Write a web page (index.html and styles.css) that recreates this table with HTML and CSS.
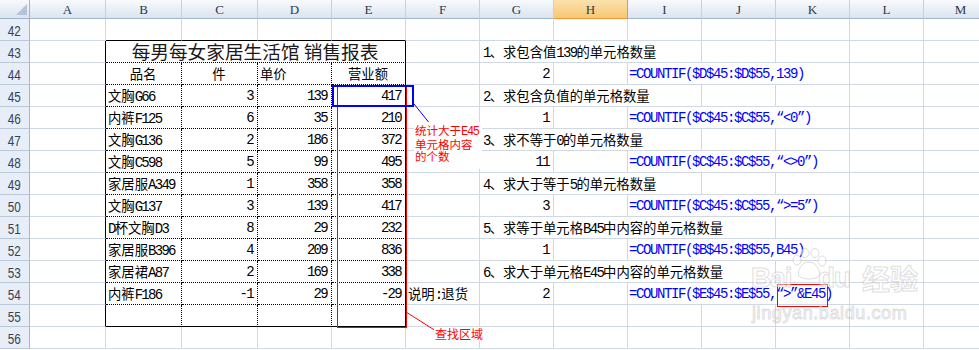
FILE: index.html
```html
<!DOCTYPE html>
<html lang="zh">
<head>
<meta charset="utf-8">
<title>销售报表</title>
<link rel="stylesheet" href="styles.css">
</head>
<body>
<div class="sheet">
  <div class="corner"></div>
  <div class="ch">A</div><div class="ch">B</div><div class="ch">C</div><div class="ch">D</div><div class="ch">E</div><div class="ch">F</div><div class="ch">G</div><div class="ch sel">H</div><div class="ch">I</div><div class="ch">J</div><div class="ch">K</div><div class="ch">L</div><div class="ch">M</div>

  <!-- 42 -->
  <div class="rh"><span>42</span></div>
  <div class="c"></div><div class="c tt"></div><div class="c tt"></div><div class="c tt"></div><div class="c tt"></div>
  <div class="c"></div><div class="c"></div><div class="c"></div><div class="c"></div><div class="c"></div><div class="c"></div><div class="c"></div><div class="c"></div>

  <!-- 43 -->
  <div class="rh"><span>43</span></div>
  <div class="c tl"></div>
  <div class="c title">每男每女家居生活馆&nbsp;销售报表</div>
  <div class="c"></div>
  <div class="c q s3"><span class="a">1</span>、求包含值<span class="a">139</span>的单元格数量</div>
  <div class="c"></div><div class="c"></div><div class="c"></div><div class="c"></div>

  <!-- 44 -->
  <div class="rh"><span>44</span></div>
  <div class="c tl"></div>
  <div class="c td ctr">品名</div><div class="c td ctr">件</div><div class="c td">单价</div><div class="c te ctr">营业额</div>
  <div class="c"></div>
  <div class="c r n">2</div><div class="c"></div>
  <div class="c f s3">=COUNTIF($D$45:$D$55,139)</div>
  <div class="c"></div><div class="c"></div>

  <!-- 45 -->
  <div class="rh"><span>45</span></div>
  <div class="c tl"></div>
  <div class="c td">文胸<span class="a">G66</span></div><div class="c td r n">3</div><div class="c td r n">139</div><div class="c te r n">417</div>
  <div class="c"></div>
  <div class="c q s3"><span class="a">2</span>、求包含负值的单元格数量</div>
  <div class="c"></div><div class="c"></div><div class="c"></div><div class="c"></div>

  <!-- 46 -->
  <div class="rh"><span>46</span></div>
  <div class="c tl"></div>
  <div class="c td">内裤<span class="a">F125</span></div><div class="c td r n">6</div><div class="c td r n">35</div><div class="c te r n">210</div>
  <div class="c"></div>
  <div class="c r n">1</div><div class="c"></div>
  <div class="c f s3">=COUNTIF($C$45:$C$55,“&lt;0”)</div>
  <div class="c"></div><div class="c"></div>

  <!-- 47 -->
  <div class="rh"><span>47</span></div>
  <div class="c tl"></div>
  <div class="c td">文胸<span class="a">G136</span></div><div class="c td r n">2</div><div class="c td r n">186</div><div class="c te r n">372</div>
  <div class="c"></div>
  <div class="c q s3"><span class="a">3</span>、求不等于<span class="a">0</span>的单元格数量</div>
  <div class="c"></div><div class="c"></div><div class="c"></div><div class="c"></div>

  <!-- 48 -->
  <div class="rh"><span>48</span></div>
  <div class="c tl"></div>
  <div class="c td">文胸<span class="a">C598</span></div><div class="c td r n">5</div><div class="c td r n">99</div><div class="c te r n">495</div>
  <div class="c"></div>
  <div class="c r n">11</div><div class="c"></div>
  <div class="c f s3">=COUNTIF($C$45:$C$55,“&lt;&gt;0”)</div>
  <div class="c"></div><div class="c"></div>

  <!-- 49 -->
  <div class="rh"><span>49</span></div>
  <div class="c tl"></div>
  <div class="c td">家居服<span class="a">A349</span></div><div class="c td r n">1</div><div class="c td r n">358</div><div class="c te r n">358</div>
  <div class="c"></div>
  <div class="c q s3"><span class="a">4</span>、求大于等于<span class="a">5</span>的单元格数量</div>
  <div class="c"></div><div class="c"></div><div class="c"></div><div class="c"></div>

  <!-- 50 -->
  <div class="rh"><span>50</span></div>
  <div class="c tl"></div>
  <div class="c td">文胸<span class="a">G137</span></div><div class="c td r n">3</div><div class="c td r n">139</div><div class="c te r n">417</div>
  <div class="c"></div>
  <div class="c r n">3</div><div class="c"></div>
  <div class="c f s3">=COUNTIF($C$45:$C$55,“&gt;=5”)</div>
  <div class="c"></div><div class="c"></div>

  <!-- 51 -->
  <div class="rh"><span>51</span></div>
  <div class="c tl"></div>
  <div class="c td"><span class="a">D</span>杯文胸<span class="a">D3</span></div><div class="c td r n">8</div><div class="c td r n">29</div><div class="c te r n">232</div>
  <div class="c"></div>
  <div class="c q s4"><span class="a">5</span>、求等于单元格<span class="a">B45</span>中内容的单元格数量</div>
  <div class="c"></div><div class="c"></div><div class="c"></div>

  <!-- 52 -->
  <div class="rh"><span>52</span></div>
  <div class="c tl"></div>
  <div class="c td">家居服<span class="a">B396</span></div><div class="c td r n">4</div><div class="c td r n">209</div><div class="c te r n">836</div>
  <div class="c"></div>
  <div class="c r n">1</div><div class="c"></div>
  <div class="c f s3">=COUNTIF($B$45:$B$55,B45)</div>
  <div class="c"></div><div class="c"></div>

  <!-- 53 -->
  <div class="rh"><span>53</span></div>
  <div class="c tl"></div>
  <div class="c td">家居裙<span class="a">A87</span></div><div class="c td r n">2</div><div class="c td r n">169</div><div class="c te r n">338</div>
  <div class="c"></div>
  <div class="c q s4"><span class="a">6</span>、求大于单元格<span class="a">E45</span>中内容的单元格数量</div>
  <div class="c"></div><div class="c"></div><div class="c"></div>

  <!-- 54 -->
  <div class="rh"><span>54</span></div>
  <div class="c tl"></div>
  <div class="c td">内裤<span class="a">F186</span></div><div class="c td r n">-1</div><div class="c td r n">29</div><div class="c te r n">-29</div>
  <div class="c">说明<span class="a">:</span>退货</div>
  <div class="c r n">2</div><div class="c"></div>
  <div class="c f s3">=COUNTIF($E$45:$E$55,“&gt;”&amp;E45)</div>
  <div class="c"></div><div class="c"></div>

  <!-- 55 -->
  <div class="rh"><span>55</span></div>
  <div class="c tl"></div>
  <div class="c tb"></div><div class="c tb"></div><div class="c tb"></div><div class="c teb"></div>
  <div class="c"></div><div class="c"></div><div class="c"></div><div class="c"></div><div class="c"></div><div class="c"></div><div class="c"></div><div class="c"></div>

  <!-- 56 -->
  <div class="rh"><span>56</span></div>
  <div class="c"></div><div class="c"></div><div class="c"></div><div class="c"></div><div class="c"></div>
  <div class="c"></div><div class="c"></div><div class="c"></div><div class="c"></div><div class="c"></div><div class="c"></div><div class="c"></div><div class="c"></div>

  <!-- overlays -->
  <div class="red-box"></div>
  <div class="blue-box"></div>
  <svg class="lines" width="979" height="350" viewBox="0 0 979 350">
    <line x1="414" y1="104" x2="431" y2="125" stroke="#0000ff" stroke-width="1"/>
    <line x1="406" y1="312" x2="436" y2="331" stroke="#ff0000" stroke-width="1"/>
  </svg>
  <div class="note">统计大于<span class="a">E45</span><br>单元格内容<br>的个数</div>
  <div class="label">查找区域</div>
  <div class="mark-box"></div>

  <div class="wm">
    <span class="wm-bai">Bai</span>
    <svg class="wm-paw" width="40" height="32" viewBox="0 0 40 32">
      <ellipse cx="8" cy="12" rx="4" ry="5"/>
      <ellipse cx="16" cy="5" rx="4" ry="4.5"/>
      <ellipse cx="26" cy="5" rx="4" ry="4.5"/>
      <ellipse cx="33" cy="13" rx="4" ry="5"/>
      <path d="M20 14 C12 14 8 24 10 28 C13 32 27 32 30 28 C32 24 28 14 20 14 Z"/>
    </svg>
    <span class="wm-du">du</span>
    <span class="wm-jy">经验</span>
    <span class="wm-url">jingyan.baidu.com</span>
  </div>
</div>
</body>
</html>
```

FILE: styles.css
```css
html, body {
  margin: 0;
  padding: 0;
  background: #fff;
}
body {
  width: 979px;
  height: 350px;
  overflow: hidden;
}
.sheet {
  position: relative;
  display: grid;
  grid-template-columns: 30px 76px 76px 76px repeat(10, 74px);
  grid-template-rows: 19px repeat(15, 22px);
  width: max-content;
  font-family: "Noto Sans CJK SC", sans-serif;
  font-size: 13.33px;
  color: #000;
}
.corner {
  position: relative;
  background: linear-gradient(#f7f9fc, #dbe3ee);
  border-right: 1px solid #9eb6ce;
  border-bottom: 1px solid #9eb6ce;
}
.corner::after {
  content: "";
  position: absolute;
  right: 2px;
  bottom: 3px;
  width: 0;
  height: 0;
  border-style: solid;
  border-width: 0 0 11px 11px;
  border-color: transparent transparent #b4c3d6 transparent;
}
.ch {
  display: flex;
  align-items: center;
  justify-content: center;
  padding-top: 1px;
  background: linear-gradient(#f8fafd, #dce4ef);
  border-right: 1px solid #c5d1df;
  border-bottom: 1px solid #9eb6ce;
  font-family: "Liberation Serif", serif;
  font-size: 13px;
  color: #2a3b4c;
}
.ch.sel {
  background: linear-gradient(#fbe1ad, #f7c874);
  border-right-color: #f29536;
  border-bottom-color: #f29536;
}
.rh {
  display: flex;
  align-items: flex-end;
  justify-content: center;
  padding-bottom: 1px;
  background: #e8eef7;
  border-right: 1px solid #9eb6ce;
  border-bottom: 1px solid #b9c9da;
  font-family: "Liberation Sans", sans-serif;
  font-size: 15px;
  line-height: 17px;
  color: #2f4556;
}
.rh span {
  display: inline-block;
  transform: scaleX(0.78);
}
.c {
  display: flex;
  align-items: flex-end;
  min-width: 0;
  padding: 0 3px 2px 2px;
  border-right: 1px solid #d0d7e5;
  border-bottom: 1px solid #d0d7e5;
  line-height: 16px;
  white-space: nowrap;
}
.r { justify-content: flex-end; }
.ctr { justify-content: center; }
.a, .n {
  font-family: "Liberation Mono", monospace;
  font-size: 14px;
  letter-spacing: -1.7px;
}
.a {
  position: relative;
  top: 1px;
}
.n { padding-right: 4px; }
.f {
  padding-left: 1px;
  font-family: "Liberation Mono", monospace;
  font-size: 14px;
  letter-spacing: -1.4px;
  color: #0000ff;
}
.q { padding-left: 3px; }
.s3 { grid-column: span 3; }
.s4 { grid-column: span 4; }

/* report table borders */
.tt { border-bottom: 1px solid #000; }
.tl { border-right: 1px solid #000; }
.td { border-right: 1px dotted #000; border-bottom: 1px dotted #000; }
.te { border-right: 1px solid #000; border-bottom: 1px dotted #000; }
.tb { border-right: 1px dotted #000; border-bottom: 1px solid #000; }
.teb { border-right: 1px solid #000; border-bottom: 1px solid #000; }
.title {
  grid-column: span 4;
  justify-content: center;
  padding-bottom: 1px;
  border-right: 1px solid #000;
  border-bottom: 1px dotted #000;
  font-size: 18.67px;
  line-height: 20px;
  color: #1a1a1a;
}

/* overlays */
.red-box {
  position: absolute;
  left: 337px;
  top: 86px;
  width: 70px;
  height: 242px;
  box-sizing: border-box;
  border: 1px solid #ff0000;
}
.blue-box {
  position: absolute;
  left: 332px;
  top: 85px;
  width: 82px;
  height: 22px;
  box-sizing: border-box;
  border: 2px solid #0000ff;
}
.lines {
  position: absolute;
  left: 0;
  top: 0;
  pointer-events: none;
}
.note {
  position: absolute;
  left: 414px;
  top: 122px;
  width: 68px;
  height: 47px;
  box-sizing: border-box;
  padding: 2px 0 0 1px;
  background: #fff;
  color: #ff0000;
  font-size: 11.5px;
  line-height: 12px;
  white-space: nowrap;
}
.note .a {
  font-size: 12px;
  letter-spacing: -1.3px;
  top: 0;
}
.label {
  position: absolute;
  left: 434px;
  top: 327px;
  padding: 0 1px;
  background: #fff;
  color: #ff0000;
  font-size: 12px;
  line-height: 14px;
}
.mark-box {
  position: absolute;
  left: 777px;
  top: 284px;
  width: 51px;
  height: 23px;
  box-sizing: border-box;
  border: 1px solid #ff0000;
}

/* watermark */
.wm {
  position: absolute;
  left: 0;
  top: 0;
  width: 979px;
  height: 350px;
  pointer-events: none;
  color: rgba(255, 255, 255, 0.5);
  -webkit-text-stroke: 1px rgba(170, 170, 170, 0.4);
}
.wm span { position: absolute; white-space: nowrap; }
.wm-bai, .wm-du {
  top: 262px;
  font-family: "Liberation Sans", sans-serif;
  font-weight: bold;
  font-size: 28px;
  letter-spacing: -1px;
}
.wm-bai { left: 751px; }
.wm-du { left: 818px; }
.wm-paw {
  position: absolute;
  left: 789px;
  top: 248px;
  fill: rgba(255, 255, 255, 0.5);
  stroke: rgba(170, 170, 170, 0.4);
  stroke-width: 1;
}
.wm-jy {
  left: 862px;
  top: 261px;
  font-family: "Noto Sans CJK SC", sans-serif;
  font-weight: bold;
  font-size: 28px;
  line-height: 34px;
}
.wm-url {
  left: 752px;
  top: 303px;
  font-family: "Liberation Sans", sans-serif;
  font-size: 18px;
  letter-spacing: 0.6px;
}
```
